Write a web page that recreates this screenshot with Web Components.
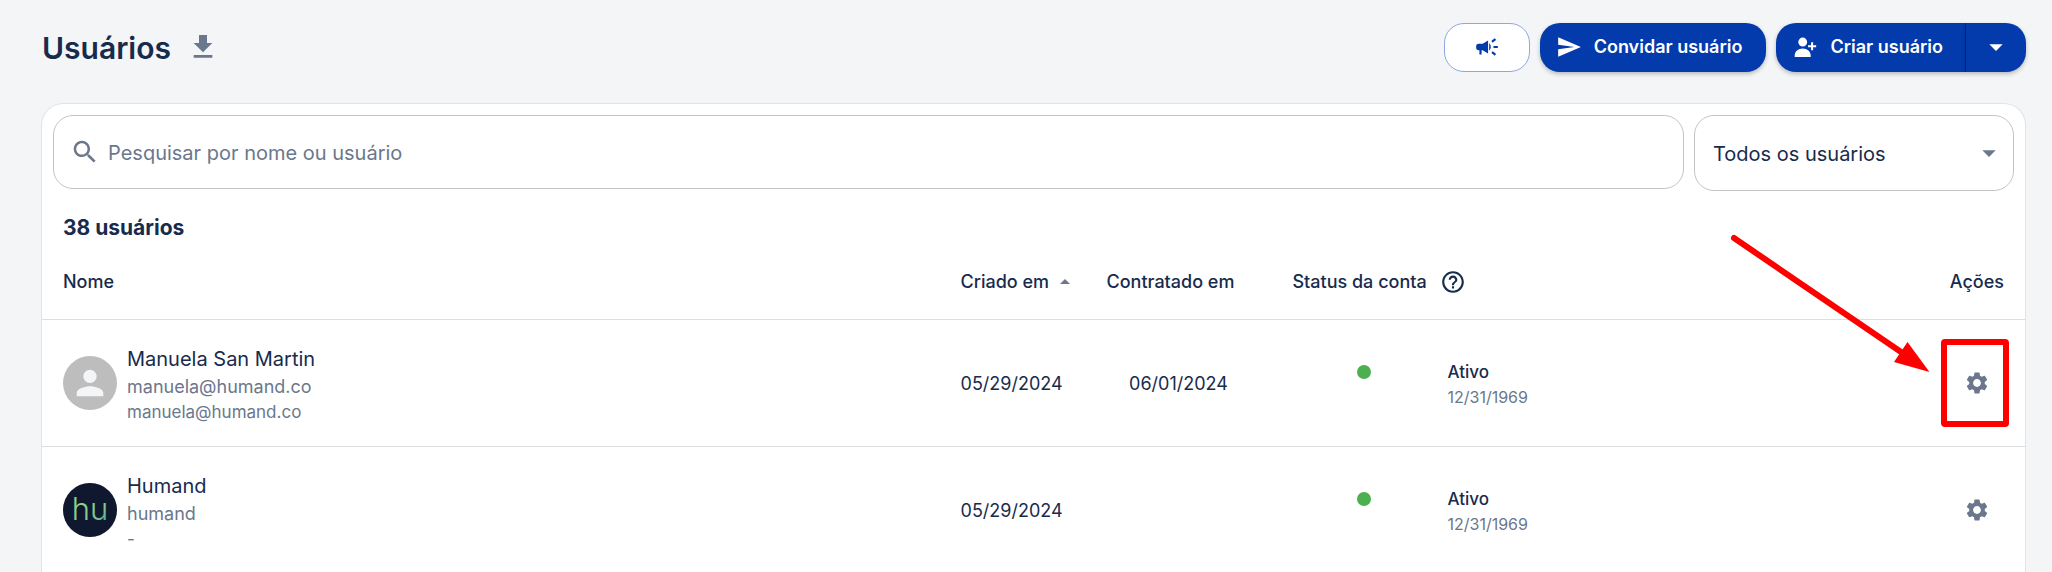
<!DOCTYPE html>
<html lang="pt">
<head>
<meta charset="utf-8">
<title>Usuários</title>
<style>
  :root {
    --ink: #172b4d;
    --muted: #6b778c;
    --brand: #033bad;
    --line: #dcdfe2;
    --field: #c4c4c4;
  }
  body {
    margin: 0;
    background: #f4f5f7;
    color: var(--ink);
    font-family: Inter, "Liberation Sans", sans-serif;
    font-size: 18px;
  }
</style>
</head>
<body>
<users-page></users-page>

<script>
const ICONS = {
  download: 'M19 9h-4V3H9v6H5l7 7 7-7zM5 18v2h14v-2H5z',
  campaign: 'M18 11v2h4v-2h-4zm-2 6.61c.96.71 2.21 1.65 3.2 2.39.4-.53.8-1.07 1.2-1.6-.99-.74-2.24-1.68-3.2-2.4-.4.54-.8 1.08-1.2 1.61zM20.4 5.6c-.4-.53-.8-1.07-1.2-1.6-.99.74-2.24 1.68-3.2 2.4.4.53.8 1.07 1.2 1.6.96-.72 2.21-1.65 3.2-2.4zM4 9c-1.1 0-2 .9-2 2v2c0 1.1.9 2 2 2h1v4h2v-4h1l5 3V6L8 9H4zm11.5 3c0-1.33-.58-2.53-1.5-3.35v6.69c.92-.81 1.5-2.01 1.5-3.34z',
  send: 'M2.01 21L23 12 2.01 3 2 10l15 2-15 2z',
  personAdd: 'M9.900 3.300a4.100 4.100 0 1 0 0 8.200a4.100 4.100 0 0 0 0-8.200zM2.500 21.200v-1.200C2.500 16 5.800 13.300 9.900 13.300s7.400 2.700 7.400 6.700v1.200zM17.600 7.600h1.900v2.800h2.800v1.900h-2.800v2.800h-1.900v-2.800h-2.800v-1.900h2.800z',
  caret: 'M7 10l5 5 5-5z',
  caretUp: 'M7 14l5-5 5 5z',
  search: 'M15.5 14h-.79l-.28-.27C15.41 12.59 16 11.11 16 9.5 16 5.91 13.09 3 9.5 3S3 5.91 3 9.500 5.910 16 9.500 16c1.610 0 3.090-.59 4.230-1.570l.27.28v.79l5 4.990L20.490 19l-4.990-5zm-6 0C7.010 14 5 11.990 5 9.500S7.010 5 9.500 5 14 7.010 14 9.500 11.990 14 9.500 14z',
  person: 'M12 12c2.210 0 4-1.790 4-4s-1.790-4-4-4-4 1.790-4 4 1.790 4 4 4zm0 2c-2.670 0-8 1.340-8 4v2h16v-2c0-2.660-5.330-4-8-4z',
  help: 'M11 18h2v-2h-2v2zm1-16C6.480 2 2 6.480 2 12s4.480 10 10 10 10-4.480 10-10S17.520 2 12 2zm0 18c-4.410 0-8-3.590-8-8s3.590-8 8-8 8 3.590 8 8-3.590 8-8 8zm0-14c-2.210 0-4 1.790-4 4h2c0-1.100.9-2 2-2s2 .9 2 2c0 2-3 1.750-3 5h2c0-2.250 3-2.500 3-5 0-2.210-1.790-4-4-4z',
  settings: 'M19.14 12.94c.04-.3.06-.61.06-.94 0-.32-.02-.64-.07-.94l2.03-1.58c.18-.14.23-.41.12-.61l-1.92-3.32c-.12-.22-.37-.29-.59-.22l-2.39.96c-.5-.38-1.03-.7-1.62-.94l-.36-2.54c-.04-.24-.24-.41-.48-.41h-3.84c-.24 0-.43.17-.47.41l-.36 2.54c-.59.24-1.13.57-1.62.94l-2.39-.96c-.22-.08-.47 0-.59.22L2.740 8.870c-.12.21-.08.47.12.61l2.030 1.580c-.05.3-.09.63-.09.94s.02.64.07.94l-2.030 1.580c-.18.14-.23.41-.12.61l1.920 3.320c.12.22.37.29.59.22l2.390-.96c.5.38 1.030.7 1.620.94l.36 2.540c.05.24.24.41.48.41h3.840c.24 0 .44-.17.47-.41l.36-2.540c.59-.24 1.130-.56 1.620-.94l2.390.96c.22.08.47 0 .59-.22l1.920-3.320c.12-.22.07-.47-.12-.61l-2.010-1.580zM12 15.600c-1.980 0-3.600-1.620-3.600-3.600s1.620-3.600 3.600-3.600 3.600 1.620 3.600 3.600-1.620 3.600-3.600 3.600z'
};

function define(name, html, setup) {
  const template = document.createElement('template');
  template.innerHTML = html;
  customElements.define(name, class extends HTMLElement {
    constructor() {
      super();
      this.attachShadow({ mode: 'open' }).append(template.content.cloneNode(true));
    }
    connectedCallback() { if (setup) setup(this, this.shadowRoot); }
  });
}

define('ui-icon', `
  <style>
    :host { display: inline-flex; flex: none; width: 26px; height: 26px; }
    svg { width: 100%; height: 100%; fill: currentColor; }
  </style>
  <svg viewBox="0 0 24 24" aria-hidden="true"><path></path></svg>`,
  (host, root) => root.querySelector('path').setAttribute('d', ICONS[host.getAttribute('name')]));

define('page-header', `
  <style>
    :host { display: flex; align-items: center; gap: 10px; height: 48px; padding-left: 1px; }
    h1 { margin: 0; padding-top: 2px; font-size: 30px; line-height: 40px; font-weight: 600; }
    .download { display: flex; margin-left: 6px; padding: 0; border: 0; background: none; color: var(--muted); }
    .download ui-icon { width: 32px; height: 32px; }
    .actions { display: flex; gap: 10px; margin-left: auto; }
  </style>
  <h1>Usuários</h1>
  <button class="download" type="button" aria-label="Baixar"><ui-icon name="download"></ui-icon></button>
  <div class="actions"><slot></slot></div>`);

define('action-button', `
  <style>
    :host { display: block; }
    button {
      display: flex; align-items: center; justify-content: center; gap: 12px;
      box-sizing: border-box; height: 49px; padding: 0 24px 0 16px;
      border: 0; border-radius: 20px; background: var(--brand); color: #fff;
      font: 600 18px/24px Inter, "Liberation Sans", sans-serif;
      box-shadow: 0 2px 4px rgba(0, 0, 0, .25);
    }
    :host([outlined]) button {
      width: 86px; padding: 0; border: 1px solid #8fa6e0;
      background: #fff; color: var(--brand); box-shadow: none;
    }
    :host([start]) button { padding-right: 22px; border-right: 1px solid #022a7a; border-radius: 20px 0 0 20px; }
    :host([end]) button { width: 60px; padding: 0; border-radius: 0 20px 20px 0; }
    :host([end]) ::slotted(ui-icon) { width: 32px; height: 32px; }
  </style>
  <button type="button"><slot></slot></button>`,
  (host, root) => {
    const label = host.getAttribute('label');
    if (label) root.querySelector('button').setAttribute('aria-label', label);
  });

define('filter-bar', `
  <style>
    :host { display: flex; align-items: flex-start; gap: 10px; padding: 11px; }
    .search, .scope {
      display: flex; align-items: center; box-sizing: border-box;
      border: 1px solid var(--field); border-radius: 20px; background: #fff;
    }
    .search { flex: 1; height: 74px; padding: 0 16px; gap: 8px; color: var(--muted); }
    .search ui-icon { width: 30px; height: 30px; }
    input, select {
      min-width: 0; padding: 2px 0 0; border: 0; outline: 0; background: none;
      font: 400 20px/28px Inter, "Liberation Sans", sans-serif; color: var(--ink);
    }
    input { flex: 1; }
    input::placeholder { color: var(--muted); opacity: 1; }
    .scope { position: relative; width: 320px; height: 76px; color: var(--muted); }
    select { width: 100%; height: 100%; padding: 2px 48px 0 18px; appearance: none; }
    .scope ui-icon { position: absolute; right: 8px; width: 32px; height: 32px; pointer-events: none; }
  </style>
  <label class="search"><ui-icon name="search"></ui-icon>
    <input type="text" aria-label="Pesquisar" placeholder="Pesquisar por nome ou usuário"></label>
  <label class="scope"><select aria-label="Filtro"><option>Todos os usuários</option></select>
    <ui-icon name="caret"></ui-icon></label>`);

define('user-identity', `
  <style>
    :host { display: flex; align-items: center; gap: 10px; }
    .text { display: flex; flex-direction: column; padding-top: 2px; color: var(--muted); }
    .name { font-size: 20px; line-height: 30px; color: var(--ink); }
    .login { font-size: 18px; line-height: 26px; }
    .mail { font-size: 17px; line-height: 24px; }
  </style>
  <slot name="avatar"></slot>
  <div class="text">
    <span class="name"><slot name="name"></slot></span>
    <span class="login"><slot name="login"></slot></span>
    <span class="mail"><slot name="mail"></slot></span>
  </div>`);

define('user-avatar', `
  <style>
    :host {
      display: flex; align-items: center; justify-content: center; flex: none;
      width: 54px; height: 54px; border-radius: 50%; background: #bdbdbd; color: #f4f5f7;
    }
    ui-icon { width: 40px; height: 40px; }
  </style>
  <slot><ui-icon name="person"></ui-icon></slot>`);

define('humand-logo', `
  <style>
    :host { display: block; width: 54px; height: 54px; }
    svg { display: block; width: 100%; height: 100%; }
    text { font: 300 31px Inter, "Liberation Sans", sans-serif; }
  </style>
  <svg viewBox="0 0 54 54">
    <defs><linearGradient id="g" gradientUnits="userSpaceOnUse" x1="22" y1="16" x2="46" y2="40">
      <stop offset="0" stop-color="#8fd08a"></stop><stop offset=".6" stop-color="#7fc98c"></stop>
      <stop offset="1" stop-color="#35a898"></stop></linearGradient></defs>
    <circle cx="27" cy="27" r="27" fill="#10182f"></circle>
    <text x="27" y="37" text-anchor="middle" fill="url(#g)">hu</text>
  </svg>`);

define('account-status', `
  <style>
    :host { display: grid; grid-template-columns: 144px auto; column-gap: 11px; align-items: center; padding-top: 2px; }
    .dot { justify-self: center; width: 14px; height: 14px; border-radius: 50%; background: #4caf50; }
    .label { font-size: 17px; line-height: 26px; font-weight: 500; }
    .since { grid-column: 2; font-size: 16px; line-height: 24px; color: var(--muted); }
  </style>
  <span class="dot"></span>
  <span class="label"><slot></slot></span>
  <span class="since"><slot name="since"></slot></span>`);

define('callout-mark', `
  <style>
    :host { position: absolute; right: -8px; top: 50%; margin-top: -153px; pointer-events: none; }
    svg { display: block; }
  </style>
  <svg width="290" height="204" viewBox="1722 230 290 204" fill="none" stroke="#f00" stroke-width="6" aria-hidden="true">
    <rect x="1944" y="342" width="62" height="82" rx="1"></rect>
    <path d="M1734 238L1904 354" stroke-linecap="round"></path>
    <path d="M1929.500 372L1907.500 342L1894 362z" fill="#f00" stroke="none"></path>
  </svg>`);

define('user-table', `
  <style>
    :host { display: block; }
    h2 { margin: 0; padding: 12px 21px 0; font-size: 21px; line-height: 28px; font-weight: 700; }
    table { width: 100%; border-collapse: separate; border-spacing: 0; table-layout: fixed; }
    th, td { box-sizing: border-box; padding: 0 21px; text-align: left; }
    th { height: 78px; padding-top: 3px; font-size: 18px; line-height: 24px; font-weight: 500; border-bottom: 1px solid var(--line); }
    td { height: 127px; font-size: 18px; line-height: 24px; border-bottom: 1px solid var(--line); }
    tbody tr:last-child td { height: 126px; border-bottom: 0; }
    .sort { display: inline-flex; align-items: center; white-space: nowrap; gap: 4px; }
    .sort ui-icon { width: 24px; height: 24px; color: var(--muted); }
    th button { display: flex; padding: 0; border: 0; background: none; color: inherit; }
    .status { display: flex; align-items: center; gap: 13px; }
    .end { text-align: right; }
    td.date { padding-top: 2px; }
    .center { text-align: center; }
    .created { width: 7.36%; } .hired { width: 9.38%; } .state { width: 30%; } .tools { width: 8%; }
    .gear { position: relative; display: flex; justify-content: flex-end; }
    .gear button { display: flex; padding: 14px; border: 0; background: none; color: var(--muted); }
    .narrow { padding-right: 0; }
  </style>
  <h2>38 usuários</h2>
  <table>
    <colgroup><col><col class="created"><col class="hired"><col class="state"><col class="tools"></colgroup>
    <thead><tr>
      <th>Nome</th>
      <th class="narrow"><span class="sort">Criado em<ui-icon name="caretUp"></ui-icon></span></th>
      <th><span class="sort">Contratado em</span></th>
      <th><span class="status">Status da conta<button type="button" aria-label="Ajuda"><ui-icon name="help"></ui-icon></button></span></th>
      <th class="end">Ações</th>
    </tr></thead>
    <tbody>
      <tr>
        <td><user-identity><user-avatar slot="avatar"></user-avatar><span slot="name">Manuela San Martin</span><span slot="login">manuela@humand.co</span><span slot="mail">manuela@humand.co</span></user-identity></td>
        <td class="narrow date">05/29/2024</td>
        <td class="center date">06/01/2024</td>
        <td><account-status>Ativo<span slot="since">12/31/1969</span></account-status></td>
        <td><div class="gear"><button type="button" aria-label="Configurações"><ui-icon name="settings"></ui-icon></button><callout-mark></callout-mark></div></td>
      </tr>
      <tr>
        <td><user-identity><user-avatar slot="avatar"><humand-logo></humand-logo></user-avatar><span slot="name">Humand</span><span slot="login">humand</span><span slot="mail">-</span></user-identity></td>
        <td class="narrow date">05/29/2024</td>
        <td></td>
        <td><account-status>Ativo<span slot="since">12/31/1969</span></account-status></td>
        <td><div class="gear"><button type="button" aria-label="Configurações"><ui-icon name="settings"></ui-icon></button></div></td>
      </tr>
    </tbody>
  </table>`);

define('users-page', `
  <style>
    :host { display: flex; flex-direction: column; box-sizing: border-box; min-height: 100vh; padding: 23px 26px 0 41px; }
    .split { display: flex; }
    main {
      flex: 1; margin-top: 32px; border: 1px solid #e1e3e6; border-bottom: 0;
      border-radius: 22px 22px 0 0; background: #fff;
    }
  </style>
  <page-header>
    <action-button outlined label="Comunicados"><ui-icon name="campaign"></ui-icon></action-button>
    <action-button><ui-icon name="send"></ui-icon>Convidar usuário</action-button>
    <div class="split">
      <action-button start><ui-icon name="personAdd"></ui-icon>Criar usuário</action-button>
      <action-button end label="Mais opções"><ui-icon name="caret"></ui-icon></action-button>
    </div>
  </page-header>
  <main><filter-bar></filter-bar><user-table></user-table></main>`);
</script>
</body>
</html>
